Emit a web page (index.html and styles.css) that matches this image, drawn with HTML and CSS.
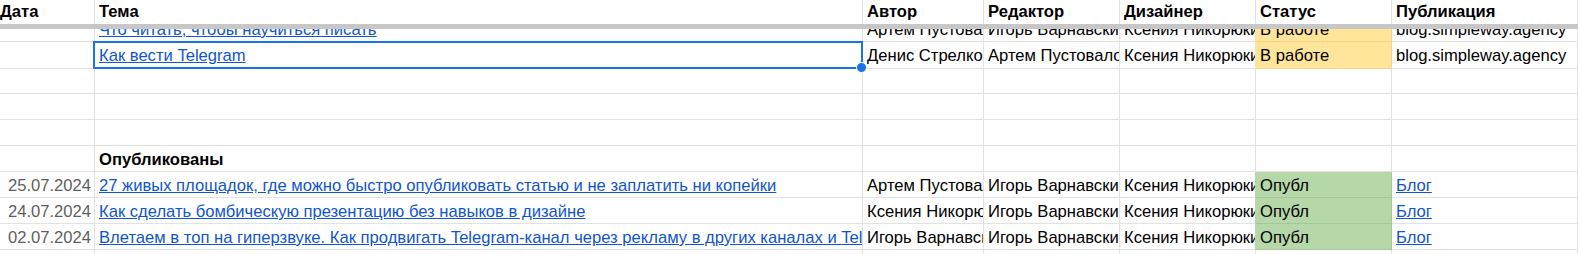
FILE: index.html
```html
<!DOCTYPE html>
<html lang="ru">
<head>
<meta charset="utf-8">
<title>Контент-план</title>
<link rel="stylesheet" href="styles.css">
</head>
<body>
<div class="sheet">
  <div class="row header">
    <div class="cell first">Дата</div>
    <div class="cell">Тема</div>
    <div class="cell">Автор</div>
    <div class="cell">Редактор</div>
    <div class="cell">Дизайнер</div>
    <div class="cell">Статус</div>
    <div class="cell">Публикация</div>
  </div>
  <div class="freeze"></div>
  <div class="viewport">
    <div class="rows">
      <div class="row">
        <div class="cell date"></div>
        <div class="cell"><a class="link" href="#">Что читать, чтобы научиться писать</a></div>
        <div class="cell">Артем Пустовалов</div>
        <div class="cell">Игорь Варнавский</div>
        <div class="cell">Ксения Никорюкина</div>
        <div class="cell status work">В работе</div>
        <div class="cell">blog.simpleway.agency</div>
      </div>
      <div class="row">
        <div class="cell date"></div>
        <div class="cell selected"><a class="link" href="#">Как вести Telegram</a><span class="sel-box"><span class="sel-handle"></span></span></div>
        <div class="cell">Денис Стрелков</div>
        <div class="cell">Артем Пустовалов</div>
        <div class="cell">Ксения Никорюкина</div>
        <div class="cell status work">В работе</div>
        <div class="cell">blog.simpleway.agency</div>
      </div>
      <div class="row">
        <div class="cell"></div><div class="cell"></div><div class="cell"></div><div class="cell"></div><div class="cell"></div><div class="cell"></div><div class="cell"></div>
      </div>
      <div class="row">
        <div class="cell"></div><div class="cell"></div><div class="cell"></div><div class="cell"></div><div class="cell"></div><div class="cell"></div><div class="cell"></div>
      </div>
      <div class="row">
        <div class="cell"></div><div class="cell"></div><div class="cell"></div><div class="cell"></div><div class="cell"></div><div class="cell"></div><div class="cell"></div>
      </div>
      <div class="row">
        <div class="cell"></div>
        <div class="cell bold">Опубликованы</div>
        <div class="cell"></div><div class="cell"></div><div class="cell"></div><div class="cell"></div><div class="cell"></div>
      </div>
      <div class="row">
        <div class="cell date">25.07.2024</div>
        <div class="cell"><a class="link" href="#">27 живых площадок, где можно быстро опубликовать статью и не заплатить ни копейки</a></div>
        <div class="cell">Артем Пустовалов</div>
        <div class="cell">Игорь Варнавский</div>
        <div class="cell">Ксения Никорюкина</div>
        <div class="cell status done">Опубл</div>
        <div class="cell"><a class="link" href="#">Блог</a></div>
      </div>
      <div class="row">
        <div class="cell date">24.07.2024</div>
        <div class="cell"><a class="link" href="#">Как сделать бомбическую презентацию без навыков в дизайне</a></div>
        <div class="cell">Ксения Никорюкина</div>
        <div class="cell">Игорь Варнавский</div>
        <div class="cell">Ксения Никорюкина</div>
        <div class="cell status done">Опубл</div>
        <div class="cell"><a class="link" href="#">Блог</a></div>
      </div>
      <div class="row">
        <div class="cell date">02.07.2024</div>
        <div class="cell"><a class="link" href="#">Влетаем в топ на гиперзвуке. Как продвигать Telegram-канал через рекламу в других каналах и Telegram Ads</a></div>
        <div class="cell">Игорь Варнавский</div>
        <div class="cell">Игорь Варнавский</div>
        <div class="cell">Ксения Никорюкина</div>
        <div class="cell status done">Опубл</div>
        <div class="cell"><a class="link" href="#">Блог</a></div>
      </div>
      <div class="row">
        <div class="cell"></div><div class="cell"></div><div class="cell"></div><div class="cell"></div><div class="cell"></div><div class="cell"></div><div class="cell"></div>
      </div>
    </div>
  </div>
</div>
</body>
</html>
```

FILE: styles.css
```css
* { box-sizing: border-box; }
html, body {
  margin: 0;
  padding: 0;
  background: #ffffff;
}
body {
  font-family: "Liberation Sans", Arial, sans-serif;
  font-size: 16.6px;
  color: #000000;
  overflow: hidden;
}
.sheet {
  width: 1578px;
  height: 254px;
  overflow: hidden;
}
.row {
  display: grid;
  grid-template-columns: 95px 768px 121px 136px 136px 136px 186px;
  height: 26px;
}
.cell {
  position: relative;
  border-right: 1px solid #e2e2e2;
  border-bottom: 1px solid #e2e2e2;
  padding: 1px 3px 0 4px;
  line-height: 25px;
  white-space: nowrap;
  overflow: hidden;
}
.header {
  height: 24px;
}
.header .cell {
  border-bottom: none;
  font-weight: bold;
  line-height: 24px;
  padding-top: 0;
}
.header .first {
  padding-left: 0;
}
.freeze {
  height: 5px;
  background: #c7c7c7;
}
.viewport {
  height: 225px;
  overflow: hidden;
}
.rows {
  margin-top: -13px;
}
.date {
  text-align: right;
  color: #5f5f5f;
}
.bold {
  font-weight: bold;
}
.link {
  color: #1155cc;
  text-decoration: underline;
}
.status.work {
  background: #ffe599;
  border-right-color: #eed68a;
  border-bottom-color: #eed68a;
  box-shadow: -1px 0 0 #ffe599;
}
.status.done {
  background: #b6d7a8;
  border-right-color: #a6c898;
  border-bottom-color: #a6c898;
  box-shadow: -1px 0 0 #b6d7a8;
}
.selected {
  overflow: visible;
  z-index: 2;
}
.selected .link {
  display: block;
  overflow: hidden;
}
.sel-box {
  position: absolute;
  top: -1px;
  left: -2px;
  right: -1px;
  bottom: -1px;
  border: 2px solid #1a73e8;
  pointer-events: none;
}
.sel-handle {
  position: absolute;
  right: -6px;
  bottom: -6px;
  width: 11px;
  height: 11px;
  border-radius: 50%;
  background: #1a73e8;
  border: 1px solid #ffffff;
}
```
